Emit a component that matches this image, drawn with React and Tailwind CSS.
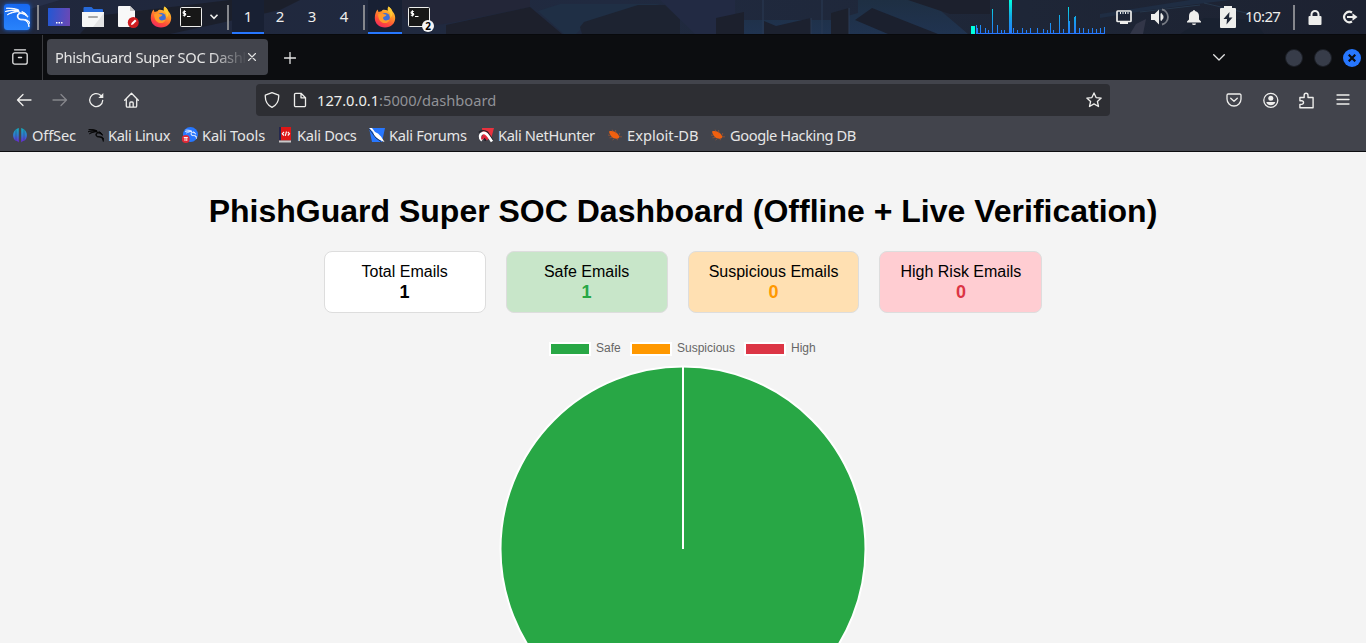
import React from "react";
import { SiKalilinux } from "react-icons/si";

const Sep = ({ className }) => <div className={`h-[25px] w-[2px] shrink-0 bg-[#85878d] ${className}`} />;

function Firefox({ className }) {
  return (
    <svg viewBox="0 0 22 22" className={`h-[22px] w-[22px] shrink-0 ${className}`}>
      <defs>
        <linearGradient id="flame" x1="0.8" y1="0" x2="0.3" y2="1">
          <stop offset="0" stopColor="#ffdf3c" />
          <stop offset="0.4" stopColor="#ff9428" />
          <stop offset="0.75" stopColor="#ff4a3a" />
          <stop offset="1" stopColor="#f02a60" />
        </linearGradient>
      </defs>
      <path d="M11 21.5C5 21.5.8 17.500.8 12 .8 8 2 5.500 3.600 3.500L4.500 6l3-.8C9 3 11 4 14 4.500L14.500.500C18 3 18 5 19 6c1.700 2 2.200 4 2.200 6 0 5.500-4.200 9.500-10.200 9.500z" fill="url(#flame)" />
      <circle cx="11.200" cy="11.500" r="4.600" fill="#3d6fd8" />
      <path d="M4 8.500c2-1.500 4-1.500 6.500-.300l2 .6c-.500 1.500-2 1.700-3.300 2.500-.5 1.700.8 3.200 2.800 3.200 1.600 0 2.600-.9 3.600-.6-.8 2-2.600 3.200-4.800 3.200-3.800 0-6.300-3-6.800-8.600z" fill="#ff9a2a" />
      <path d="M14.500.500c-1.500 2-1 3.700.5 5.500 1.400 1.600 2 3.500 1.200 6 2.500-2 2.700-5 1.300-8C16.800 2.500 15.700 1.300 14.500.500z" fill="#ffc933" />
    </svg>
  );
}

function Terminal({ className }) {
  return (
    <svg viewBox="0 0 22 20" className={`h-[20px] w-[22px] shrink-0 ${className}`}>
      <rect x="0.5" y="0.5" width="21" height="19" rx="1" fill="#171717" stroke="#eeeeec" />
      <path d="M5.800 4.500H4a.9.9 0 0 0 0 1.900h.8a.9.9 0 0 1 0 1.900H2.800M4.400 3.200v6.200M7 9.500h3.500" fill="none" stroke="#fff" strokeWidth="1.100" />
    </svg>
  );
}

const wallpaper = (
  <svg viewBox="0 0 1366 34" className="absolute inset-0 h-[34px] w-[1366px]" preserveAspectRatio="none">
    <defs>
      <linearGradient id="base" x1="0" x2="1" y1="0" y2="0">
        <stop offset="0" stopColor="#20273c" />
        <stop offset="0.45" stopColor="#202a40" />
        <stop offset="0.75" stopColor="#1e2637" />
        <stop offset="1" stopColor="#1d2231" />
      </linearGradient>
      <linearGradient id="pane" x1="0" x2="0" y1="0" y2="1">
        <stop offset="0" stopColor="#1e2f43" />
        <stop offset="1" stopColor="#203350" />
      </linearGradient>
    </defs>
    <rect width="1366" height="34" fill="url(#base)" />
    <path d="M80 34 96 16 230 0h70l-20 10-110 24z" fill="#1b1f2b" />
    <path d="M0 0h60L20 12 0 14z" fill="#27304a" />
    <path d="M400 0h130v7l-80 16-20 3-25-8z" fill="#232638" />
    <path d="M446 34v-9l84-18 32 27z" fill="#1d202c" />
    <path d="M538 11 560 4h100l-20 6-56 16-8 8h-12z" fill="#1f2f45" />
    <path d="m580 27 4-5 54-17h42v29h-98z" fill="#1d2331" />
    <path d="M660 0h75v34h-40z" fill="#222a43" />
    <path d="m716 18 28-6v22h-28z" fill="#1c202d" />
    <path d="M744 20h90l24-7V0h70l40 34H744z" fill="url(#pane)" />
    <path d="M764 21 776 26l35-8v16h-47z" fill="#1c212f" />
    <path d="m831 13 18-5v26h-18z" fill="#1c202c" />
    <path d="m872 8 66 26h-50L855 20z" fill="#1b202e" />
    <path d="M908 0h82v14h-40z" fill="#1c202d" />
    <path d="M763 0v34M849 8v26M811 18v16M822 0v34" stroke="#2a3a55" />
    <path d="m1136 24 10-5-3 15h-13z" fill="#323648" />
    <path d="m1100 14 90-14h40l-80 10-50 8z" fill="#1f2d43" />
    <path d="m1180 34 24-16 50 2 10 14z" fill="#192130" />
    <path d="m1140 12 60-7M1204 3l72 17" stroke="#26374c" />
  </svg>
);

const spectrum = [
  [976, 9], [977, 6], [980, 9], [985, 6], [988, 4], [992, 25], [997, 9], [1001, 4], [1004, 4],
  [1013, 6], [1017, 4], [1022, 6], [1026, 4], [1030, 6], [1037, 6], [1043, 5], [1047, 4], [1050, 11], [1053, 4], [1059, 19],
  [1063, 5], [1068, 27], [1069, 13], [1074, 17], [1075, 18], [1079, 6], [1083, 6], [1088, 5], [1092, 6], [1096, 5], [1100, 6], [1104, 7],
];

function Spectrum() {
  return (
    <svg viewBox="971 0 135 34" className="ml-[541px] h-[34px] w-[135px] shrink-0" shapeRendering="crispEdges">
      <defs>
        <linearGradient id="bars" gradientUnits="userSpaceOnUse" x1="0" x2="0" y1="0" y2="34">
          <stop offset="0" stopColor="#00ffe0" />
          <stop offset="0.5" stopColor="#13a9e6" />
          <stop offset="1" stopColor="#2777ff" />
        </linearGradient>
      </defs>
      <rect x="971" y="26" width="4" height="8" fill="#00ffe0" />
      <rect x="1009" y="0" width="3" height="34" fill="url(#bars)" />
      <rect x="977" y="33" width="128" height="1" fill="#2777ff" />
      {spectrum.map(([x, h]) => (
        <rect key={x} x={x} y={34 - h} width="1" height={h} fill="url(#bars)" />
      ))}
    </svg>
  );
}

function Panel() {
  return (
    <div className="relative h-[35px] overflow-hidden border-b border-[#08090c] bg-[#20273a]">
      {wallpaper}
      <div className="relative flex h-[34px] items-center text-[15px] text-[#eeeeec]">
        <div className="ml-[4px] flex h-[26px] w-[26px] shrink-0 items-center justify-center rounded-[3px] bg-gradient-to-b from-[#1768f0] to-[#2983fb] text-white shadow-[0_0_4px_#1668e8]">
          <SiKalilinux size={25} className="stroke-white stroke-[0.9]" />
        </div>
        <Sep className="ml-[7px]" />
        <svg viewBox="0 0 22 18" className="ml-[9px] h-[18px] w-[22px] shrink-0">
          <defs>
            <linearGradient id="desktop" x1="0" y1="0.5" x2="1" y2="0.6">
              <stop offset="0" stopColor="#2557d2" />
              <stop offset="1" stopColor="#6b48b5" />
            </linearGradient>
          </defs>
          <rect width="22" height="18" rx="0.500" fill="url(#desktop)" />
          <path d="M8 14h1.500v1.500H8zM10.500 14H12v1.500h-1.500zM13 14h1.500v1.500H13z" fill="#fff" />
        </svg>
        <svg viewBox="0 0 22 20" className="ml-[12px] h-[20px] w-[22px] shrink-0">
          <path d="M1.500 6V1a1 1 0 0 1 1-1h7l2 2h8.500a1 1 0 0 1 1 1v3z" fill="#2669d9" />
          <path d="M0 5h22v14a1 1 0 0 1-1 1H1a1 1 0 0 1-1-1z" fill="#f6f6f6" />
          <path d="M22 6v14H11z" fill="#e3e3e3" />
          <rect x="6" y="9" width="10" height="2" rx="1" fill="#a7a7a7" />
        </svg>
        <svg viewBox="0 0 21 22" className="ml-[14px] h-[22px] w-[21px] shrink-0">
          <path d="M1 0h11l5 5v16H1a1 1 0 0 1-1-1V1a1 1 0 0 1 1-1z" fill="#f8f8f8" />
          <path d="m12 0 5 5h-5z" fill="#c9c9c9" />
          <circle cx="15.300" cy="16.500" r="5.500" fill="#cf1d20" />
          <path d="m13 19 .5-2 3.500-3.500 1.500 1.500-3.500 3.500z" fill="#fff" />
        </svg>
        <Firefox className="ml-[11px]" />
        <Terminal className="ml-[8px]" />
        <svg viewBox="0 0 10 6" className="ml-[7px] h-[6px] w-[10px] shrink-0">
          <path d="m1.500.8 3.500 3.500L8.500.8" fill="none" stroke="#eeeeec" strokeWidth="1.600" />
        </svg>
        <Sep className="ml-[8px]" />
        <div className="ml-[3px] flex h-[34px] w-[32px] shrink-0 items-center justify-center border-b-2 border-[#2777ff] bg-[#182033]">1</div>
        <div className="-mt-[2px] w-[32px] shrink-0 text-center">2</div>
        <div className="-mt-[2px] w-[32px] shrink-0 text-center">3</div>
        <div className="-mt-[2px] w-[32px] shrink-0 text-center">4</div>
        <Sep className="ml-[3px]" />
        <div className="ml-[3px] flex h-[34px] w-[34px] shrink-0 items-center justify-center border-b-2 border-[#2777ff] bg-[#182033] pt-[2px]">
          <Firefox className="" />
        </div>
        <div className="relative ml-[6px] h-[20px] w-[22px] shrink-0">
          <Terminal className="" />
          <div className="absolute left-[14px] top-[13px] flex h-[12px] w-[12px] items-center justify-center rounded-full bg-[#f4f4f4] text-[10px] font-bold leading-none text-black">2</div>
        </div>
        <Spectrum />
        <svg viewBox="0 0 16 14" className="ml-[10px] h-[14px] w-[16px] shrink-0">
          <rect x="1" y="1" width="14" height="10.500" rx="0.800" fill="none" stroke="#eeeeec" strokeWidth="1.700" />
          <path d="M4 12h8v2H4zM4 2h1v2H4zM6.500 2h1v2h-1zM9 2h1v2H9zM11.500 2h1v2h-1z" fill="#eeeeec" />
        </svg>
        <svg viewBox="0 0 18 18" className="ml-[19px] h-[18px] w-[18px] shrink-0">
          <path d="M0 6h3.500L8 1.500v15L3.500 12H0z" fill="#eeeeec" />
          <path d="M10 5.500a4 4 0 0 1 0 7z" fill="#eeeeec" stroke="#eeeeec" />
          <path d="M11 1.500a7.700 7.700 0 0 1 0 15" fill="none" stroke="#777b84" strokeWidth="1.800" />
        </svg>
        <svg viewBox="0 0 14 15" className="ml-[18px] h-[15px] w-[14px] shrink-0">
          <path d="M6 1a1 1 0 0 1 2 0c2.700.5 4 2.600 4 5v3.500l2 2v1H0v-1l2-2V6c0-2.400 1.300-4.500 4-5zM5 13.500h4a2 1.500 0 0 1-4 0z" fill="#eeeeec" />
        </svg>
        <svg viewBox="0 0 16 22" className="ml-[19px] h-[22px] w-[16px] shrink-0">
          <path d="M4 0h8v2h3a1 1 0 0 1 1 1v18a1 1 0 0 1-1 1H1a1 1 0 0 1-1-1V3a1 1 0 0 1 1-1h3z" fill="#eeeeec" />
          <path d="m9.500 6-6 7H7l-.5 5.500 6-7H9z" fill="#1f2636" />
        </svg>
        <div className="-mt-[2px] ml-[9px] w-[38px] shrink-0 whitespace-nowrap tracking-[-0.600px]">10:27</div>
        <Sep className="ml-[10px]" />
        <svg viewBox="0 0 14 15" className="ml-[13px] h-[15px] w-[14px] shrink-0">
          <path d="M3.500 8V4.500a3.500 3.500 0 0 1 7 0V8" fill="none" stroke="#eeeeec" strokeWidth="2" />
          <rect x="0.500" y="6" width="13" height="9" rx="1" fill="#eeeeec" />
        </svg>
        <svg viewBox="0 0 16 14" className="ml-[20px] h-[14px] w-[16px] shrink-0">
          <path d="M10 2.500A5.200 5.200 0 1 0 10 11.500" fill="none" stroke="#eeeeec" strokeWidth="2.200" />
          <path d="M5 6h5.500V3.300L15.500 7l-5 3.700V8H5z" fill="#eeeeec" />
        </svg>
      </div>
    </div>
  );
}

function Line({ className, box = "0 0 16 16", children }) {
  return (
    <svg viewBox={box} fill="none" stroke="currentColor" strokeWidth="1.300" strokeLinecap="round" strokeLinejoin="round" className={`shrink-0 ${className}`}>
      {children}
    </svg>
  );
}

function TabBar() {
  return (
    <div className="flex h-[45px] items-center bg-[#0c0d10] text-[#e4e4e4]">
      <Line className="-mt-[1px] ml-[12px] h-[16px] w-[16px]">
        <path d="M2.500.8h11" />
        <rect x="0.800" y="3.800" width="14.400" height="11.400" rx="2" />
        <path d="M6.500 8.500h3" strokeWidth="1.500" />
      </Line>
      <div className="ml-[14px] h-full w-px shrink-0 bg-[#3b3c40]" />
      <div className="-mt-[1px] ml-[4px] flex h-[36px] w-[221px] shrink-0 items-center rounded bg-[#42444c]">
        <div className="-mt-[1px] ml-[8px] w-[190px] whitespace-nowrap text-[14.670px] tracking-[-0.350px] [mask-image:linear-gradient(to_right,black_155px,transparent_192px)]">PhishGuard Super SOC Dashb</div>
        <Line className="ml-[3px] h-[8px] w-[8px]" box="0 0 8 8">
          <path d="m.5.5 7 7m0-7-7 7" strokeWidth="1.100" />
        </Line>
      </div>
      <Line className="ml-[16px] h-[12px] w-[12px]" box="0 0 12 12">
        <path d="M6 .5v11M.5 6h11" />
      </Line>
      <Line className="-mt-[1px] ml-[917px] h-[7px] w-[12px]" box="0 0 12 7">
        <path d="m.7.7 5.300 5.300L11.300.7" />
      </Line>
      <div className="ml-[60px] h-[18px] w-[18px] shrink-0 rounded-full border border-[#1b1e25] bg-[#373c49]" />
      <div className="ml-[11px] h-[18px] w-[18px] shrink-0 rounded-full border border-[#1b1e25] bg-[#373c49]" />
      <div className="ml-[11px] flex h-[18px] w-[18px] shrink-0 items-center justify-center rounded-full bg-[#2777ff]">
        <svg viewBox="0 0 8 8" className="h-[8px] w-[8px]">
          <path d="m.7.7 6.600 6.600m0-6.600L.7 7.300" stroke="#0c0d10" strokeWidth="2.200" />
        </svg>
      </div>
    </div>
  );
}

function Toolbar() {
  return (
    <div className="flex h-[40px] items-center text-[#eeeeec]">
      <Line className="ml-[16px] h-[16px] w-[16px]">
        <path d="M15 8H1.500M7 2.500 1.500 8 7 13.500" />
      </Line>
      <Line className="ml-[20px] h-[16px] w-[16px] text-[#85868b]">
        <path d="M1 8h13.500M9 2.500 14.500 8 9 13.500" />
      </Line>
      <Line className="ml-[20px] h-[16px] w-[16px]">
        <path d="M14.700 8.500A6.500 6.500 0 1 1 12.500 3.200l1.500 1.300" />
        <path d="M15.300 1v5h-5z" fill="currentColor" stroke="none" />
      </Line>
      <Line className="ml-[20px] h-[16px] w-[16px]">
        <path d="M.7 8.300 7.500 1.300l6.800 7M2.300 7.300v6.700a1.200 1.200 0 0 0 1.200 1.200h8a1.200 1.200 0 0 0 1.200-1.200V7.300M5.800 15v-4a1 1 0 0 1 1-1h1.400a1 1 0 0 1 1 1v4" />
      </Line>
      <div className="ml-[116px] flex h-[32px] w-[854px] shrink-0 items-center rounded bg-[#2d2e33]">
        <Line className="ml-[8px] h-[16px] w-[16px]">
          <path d="M8 .7 14.700 3.200C15 8.500 13 13 8 15.300 3 13 1 8.500 1.300 3.200z" />
        </Line>
        <Line className="ml-[12px] h-[16px] w-[16px]">
          <path d="M3.700 1.300H9l4.500 4.500v7.700a1.200 1.200 0 0 1-1.200 1.200H3.700a1.200 1.200 0 0 1-1.200-1.200v-11a1.200 1.200 0 0 1 1.200-1.200zM9 1.500V5.800h4.300" />
        </Line>
        <div className="ml-[9px] w-[760px] shrink-0 whitespace-nowrap text-[14.670px]">
          127.0.0.1<span className="text-[#919297]">:5000/dashboard</span>
        </div>
        <Line className="ml-[9px] h-[16px] w-[16px]">
          <path d="m8 .9 2.100 4.700 5.100.5-3.800 3.400 1.100 5L8 11.900l-4.500 2.600 1.100-5L.8 6.100l5.100-.5z" />
        </Line>
      </div>
      <Line className="ml-[116px] h-[16px] w-[16px]">
        <path d="M2.200 2h11.600a1.200 1.200 0 0 1 1.200 1.200V7A7 7 0 0 1 1 7V3.200A1.200 1.200 0 0 1 2.200 2zM4.700 6.200 8 9.300l3.300-3.100" />
      </Line>
      <Line className="ml-[20px] h-[16px] w-[17px]">
        <circle cx="8.300" cy="8.300" r="7" />
        <circle cx="8.300" cy="6.300" r="2.500" fill="currentColor" stroke="none" />
        <path d="M3.800 10.100h9c-.5 2.200-2.500 3.200-4.500 3.200s-4-1-4.500-3.200z" fill="currentColor" stroke="none" />
      </Line>
      <Line className="ml-[19px] h-[17px] w-[17px]">
        <path d="M1.800 5.200h4V3a1.800 1.800 0 0 1 3.600 0v2.200h4.800v9.600H1.800v-3.200h1.700a1.600 1.600 0 0 0 0-3.400H1.800z" />
      </Line>
      <Line className="ml-[20px] h-[16px] w-[16px]">
        <path d="M2 3h12M2 7.500h12M2 12h12" />
      </Line>
    </div>
  );
}

const OffSec = (
  <svg viewBox="0 0 16 16" className="h-4 w-4">
    <defs>
      <linearGradient id="offsec" x1="0" y1="0" x2="0" y2="1">
        <stop offset="0" stopColor="#13afbb" />
        <stop offset="0.500" stopColor="#3078ce" />
        <stop offset="1" stopColor="#7020d8" />
      </linearGradient>
    </defs>
    <path d="M6.800 1v14.500C5.500 14 4 14 3 13.300A7.500 7.500 0 0 1 6.800 1zM9.200 1v14.500C10.500 14 12 14 13 13.300A7.500 7.500 0 0 0 9.200 1z" fill="url(#offsec)" />
    <path d="M4 2.500v11M12 2.500v11" stroke="#29446f" strokeWidth="0.500" />
  </svg>
);
const KaliTools = (
  <svg viewBox="0 0 16 16" className="h-4 w-4">
    <circle cx="8.500" cy="7.500" r="7.500" fill="#2777ff" />
    <SiKalilinux x="3" y="1.500" size={12} color="#fff" className="stroke-white stroke-[0.8]" />
    <circle cx="3.800" cy="12" r="3.900" fill="#e02936" />
    <path d="M1.800 10.500h4M3 10.500v3.500M4.800 10.500v3.500" stroke="#fff" strokeWidth="0.900" />
  </svg>
);
const KaliDocs = (
  <svg viewBox="0 0 16 16" className="h-4 w-4">
    <path d="M2 0h12v13.500H2z" fill="#de1616" />
    <path d="M2 0h2v13.500H2z" fill="#25294f" />
    <path d="M2 13.500h12v2H2z" fill="#c9c9c9" />
    <path d="m7 5-1.700 1.700L7 8.500M10.800 5l1.700 1.700-1.700 1.800M9.500 4.500 8.300 8.800" fill="none" stroke="#fff" strokeWidth="1.100" />
  </svg>
);
const KaliForums = (
  <svg viewBox="0 0 16 16" className="h-4 w-4">
    <path d="M0 1h16l-3 14H3z" fill="#2777ff" />
    <path d="M0 1h3l3 4 3 1.500 3 3 3.500 5.500-2-.8-4-2-4-3.200L4 5z" fill="#fff" />
    <path d="M0 1.500 4 7l3 4 5 3.500" fill="none" stroke="#20232b" strokeWidth="0.800" />
  </svg>
);
const NetHunter = (
  <svg viewBox="0 0 16 16" className="h-4 w-4">
    <path d="M4 1h12l-3 11H5z" fill="#e8323e" />
    <path d="M.8 5.500C3 3 7 3 9.500 5l5.500 8" fill="none" stroke="#20232b" strokeWidth="1.200" />
    <path d="M4 13.500C1 11 1.500 7 5 6c4-.8 5.500 3.500 9 8.500" fill="none" stroke="#fff" strokeWidth="2.600" />
    <path d="M4.300 12.500C3 9.500 6 7.500 9.500 13" fill="none" stroke="#d7263b" strokeWidth="1.800" />
    <path d="M5.800 11c1.200-.5 2 .5 2.600 3H6.500z" fill="#20232b" />
  </svg>
);
const Bug = (
  <svg viewBox="0 0 16 16" className="h-4 w-4">
    <path d="M2 4.500c3-1.300 8 .3 9.800 4l.8 1.300-1 1.500-1.600.4C6.500 12 3 9.500 2 4.500z" fill="#f0600e" />
    <path d="m6 5-.8-2.300M9 6.500 8.500 3M12 8.500l.8-2.500M3.500 8.500 1 8M5 10.500l-2.500.3M7 12l-1.500 1M10.500 11.500l-.3 1.700M12.500 9.800H15" stroke="#a9552d" strokeWidth="0.700" />
  </svg>
);

const bookmarks = [
  { label: "OffSec", icon: OffSec, cell: "w-[76px] tracking-[-0.150px]" },
  { label: "Kali Linux", icon: <SiKalilinux size={17} color="#050505" className="stroke-[#050505] stroke-[1.2]" />, cell: "w-[94px] tracking-[-0.400px]" },
  { label: "Kali Tools", icon: KaliTools, cell: "w-[95px] tracking-[-0.120px]" },
  { label: "Kali Docs", icon: KaliDocs, cell: "w-[92px] tracking-[-0.300px]" },
  { label: "Kali Forums", icon: KaliForums, cell: "w-[109px] tracking-[-0.300px]" },
  { label: "Kali NetHunter", icon: NetHunter, cell: "w-[129px] tracking-[-0.370px]" },
  { label: "Exploit-DB", icon: Bug, cell: "w-[103px]" },
  { label: "Google Hacking DB", icon: Bug, cell: "w-[160px] tracking-[-0.420px]" },
];

function Bookmarks() {
  return (
    <div className="flex h-[31px] items-center pb-[2px] pl-[12px] text-[14.670px] text-[#e6e6e6]">
      {bookmarks.map((b) => (
        <div key={b.label} className={`flex shrink-0 items-center gap-[4px] whitespace-nowrap ${b.cell}`}>
          <span className="mt-[1px] flex w-4 shrink-0 justify-center">{b.icon}</span>
          {b.label}
        </div>
      ))}
    </div>
  );
}

const stats = [
  { label: "Total Emails", value: 1, card: "bg-white", number: "text-black" },
  { label: "Safe Emails", value: 1, card: "bg-[#c8e6c9]", number: "text-[#28a745]" },
  { label: "Suspicious Emails", value: 0, card: "bg-[#ffe0b2]", number: "text-[#ff9800]" },
  { label: "High Risk Emails", value: 0, card: "bg-[#ffcdd2]", number: "text-[#dc3545]" },
];

const legend = [
  { label: "Safe", swatch: "bg-[#28a745]", width: "w-[81px]" },
  { label: "Suspicious", swatch: "bg-[#ff9800]", width: "w-[114px]" },
  { label: "High", swatch: "bg-[#dc3545]", width: "w-[72px]" },
];

function Dashboard() {
  return (
    <main className="flex h-[491px] flex-col items-center overflow-hidden bg-[#f4f4f4] pt-[41px] font-['Liberation_Sans',Arial,sans-serif] text-black">
      <h1 className="text-[32px] font-bold leading-[37px]">PhishGuard Super SOC Dashboard (Offline + Live Verification)</h1>
      <div className="mt-[21px] flex gap-[20px]">
        {stats.map((s) => (
          <div key={s.label} className={`h-[62px] min-w-[162px] rounded-[8px] border border-[#ddd] px-[20px] pt-[10px] text-center ${s.card}`}>
            <div className="text-[16px] leading-[20px]">{s.label}</div>
            <div className={`text-[18px] font-bold leading-[20px] ${s.number}`}>{s.value}</div>
          </div>
        ))}
      </div>
      <div className="mt-[29px] flex h-[14px] w-[268px] shrink-0">
        {legend.map((l) => (
          <div key={l.label} className={`flex shrink-0 items-center gap-[5px] text-[12px] leading-[14px] text-[#666] ${l.width}`}>
            <span className={`h-[14px] w-[42px] shrink-0 border-2 border-white ${l.swatch}`} />
            <span className="-mt-[2px]">{l.label}</span>
          </div>
        ))}
      </div>
      <svg viewBox="0 0 368 368" className="mt-[8px] h-[368px] w-[368px] shrink-0">
        <circle cx="184" cy="185" r="182.500" fill="#28a745" stroke="#fff" strokeWidth="2" />
        <path d="M184 2.500V185" stroke="#fff" strokeWidth="2" />
      </svg>
    </main>
  );
}

export default function App() {
  return (
    <div className="h-[643px] w-[1366px] overflow-hidden font-['Noto_Sans',sans-serif]">
      <Panel />
      <TabBar />
      <div className="border-b border-[#0c0d10] bg-[#42444c]">
        <Toolbar />
        <Bookmarks />
      </div>
      <Dashboard />
    </div>
  );
}
